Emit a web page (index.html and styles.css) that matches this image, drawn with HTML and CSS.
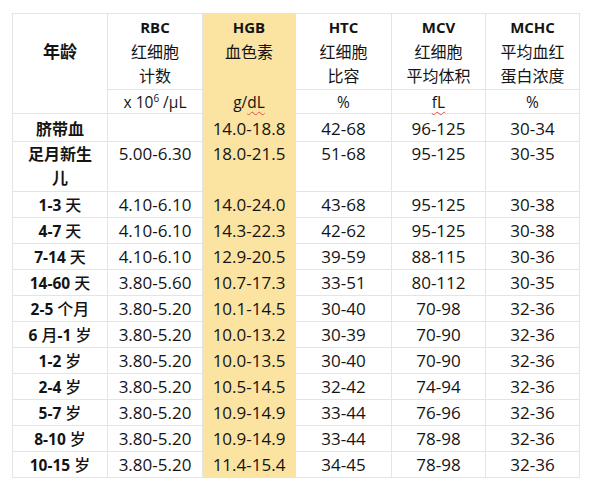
FILE: index.html
```html
<!DOCTYPE html>
<html lang="zh">
<head>
<meta charset="utf-8">
<link rel="stylesheet" href="styles.css">
</head>
<body>
<table class="ref">
  <colgroup>
    <col class="c-age"><col class="c-rbc"><col class="c-hgb"><col class="c-htc"><col class="c-mcv"><col class="c-mchc">
  </colgroup>
  <thead>
    <tr class="head">
      <th rowspan="2" class="age-head">年龄</th>
      <th><b>RBC</b><br>红细胞<br>计数</th>
      <th class="hgb"><b>HGB</b><br>血色素</th>
      <th><b>HTC</b><br>红细胞<br>比容</th>
      <th><b>MCV</b><br>红细胞<br>平均体积</th>
      <th><b>MCHC</b><br>平均血红<br>蛋白浓度</th>
    </tr>
    <tr class="units">
      <td>x 10<sup>6</sup> /μL</td>
      <td class="hgb">g/<span class="spell">dL</span></td>
      <td>%</td>
      <td><span class="spell">fL</span></td>
      <td>%</td>
    </tr>
  </thead>
  <tbody>
    <tr class="r-cord"><th>脐带血</th><td></td><td class="hgb">14.0-18.8</td><td>42-68</td><td>96-125</td><td>30-34</td></tr>
    <tr class="r-tall"><th>足月新生儿</th><td>5.00-6.30</td><td class="hgb">18.0-21.5</td><td>51-68</td><td>95-125</td><td>30-35</td></tr>
    <tr class="r"><th>1-3 <span class="u">天</span></th><td>4.10-6.10</td><td class="hgb">14.0-24.0</td><td>43-68</td><td>95-125</td><td>30-38</td></tr>
    <tr class="r"><th>4-7 <span class="u">天</span></th><td>4.10-6.10</td><td class="hgb">14.3-22.3</td><td>42-62</td><td>95-125</td><td>30-38</td></tr>
    <tr class="r"><th>7-14 <span class="u">天</span></th><td>4.10-6.10</td><td class="hgb">12.9-20.5</td><td>39-59</td><td>88-115</td><td>30-36</td></tr>
    <tr class="r"><th>14-60 <span class="u">天</span></th><td>3.80-5.60</td><td class="hgb">10.7-17.3</td><td>33-51</td><td>80-112</td><td>30-35</td></tr>
    <tr class="r"><th>2-5 <span class="u">个月</span></th><td>3.80-5.20</td><td class="hgb">10.1-14.5</td><td>30-40</td><td>70-98</td><td>32-36</td></tr>
    <tr class="r"><th>6 <span class="u">月</span>-1 <span class="u">岁</span></th><td>3.80-5.20</td><td class="hgb">10.0-13.2</td><td>30-39</td><td>70-90</td><td>32-36</td></tr>
    <tr class="r"><th>1-2 <span class="u">岁</span></th><td>3.80-5.20</td><td class="hgb">10.0-13.5</td><td>30-40</td><td>70-90</td><td>32-36</td></tr>
    <tr class="r"><th>2-4 <span class="u">岁</span></th><td>3.80-5.20</td><td class="hgb">10.5-14.5</td><td>32-42</td><td>74-94</td><td>32-36</td></tr>
    <tr class="r"><th>5-7 <span class="u">岁</span></th><td>3.80-5.20</td><td class="hgb">10.9-14.9</td><td>33-44</td><td>76-96</td><td>32-36</td></tr>
    <tr class="r"><th>8-10 <span class="u">岁</span></th><td>3.80-5.20</td><td class="hgb">10.9-14.9</td><td>33-44</td><td>78-98</td><td>32-36</td></tr>
    <tr class="r"><th>10-15 <span class="u">岁</span></th><td>3.80-5.20</td><td class="hgb">11.4-15.4</td><td>34-45</td><td>78-98</td><td>32-36</td></tr>
  </tbody>
</table>
</body>
</html>
```

FILE: styles.css
```css
html, body {
  margin: 0;
  padding: 0;
  background: #ffffff;
}

body {
  font-family: "Open Sans", "Noto Sans CJK SC", sans-serif;
  color: #141414;
}

.ref {
  margin: 13px 0 0 12px;
  border-collapse: collapse;
  table-layout: fixed;
  width: 567px;
}

.c-age { width: 95px; }
.c-rbc { width: 95px; }
.c-hgb { width: 93px; }
.c-htc { width: 96px; }
.c-mcv { width: 94px; }
.c-mchc { width: 94px; }

.ref th,
.ref td {
  border: 1px solid #e4e4e4;
  padding: 0;
  text-align: center;
  vertical-align: middle;
  font-weight: normal;
  box-sizing: border-box;
}

/* header */
.ref .head { height: 76px; }

.ref .head th {
  vertical-align: top;
  padding-top: 0;
  font-family: "Noto Sans CJK SC", sans-serif;
  font-size: 16px;
  line-height: 24px;
}

.head b {
  font-family: "Open Sans", "Noto Sans CJK SC", sans-serif;
  font-weight: 700;
  font-size: 15px;
}

.ref .head .age-head {
  font-weight: 700;
  font-size: 17px;
  line-height: 25px;
  padding-top: 24px;
}

.ref .units { height: 24px; }

.ref .units td {
  font-size: 15.5px;
  line-height: 20px;
}

.units sup {
  font-size: 10px;
  line-height: 0;
  vertical-align: 6px;
}

.spell {
  text-decoration: underline wavy #e0504a;
  text-decoration-thickness: 1px;
  text-underline-offset: 3px;
}

/* body */
.ref tbody td {
  font-size: 17px;
  line-height: 24px;
}

.ref tbody th {
  font-family: "Open Sans", "Noto Sans CJK SC", sans-serif;
  font-weight: 700;
  font-size: 15.5px;
  line-height: 24px;
}

.ref tbody th .u {
  font-family: "Noto Sans CJK SC", sans-serif;
  font-weight: 500;
  font-size: 16px;
}

.ref .r-cord { height: 28px; }

.ref .r-cord td,
.ref .r-cord th {
  padding-top: 2px;
}

.ref .r-cord th {
  font-size: 16px;
}

.ref .r-tall { height: 50px; }

.ref .r-tall th {
  padding: 0 10px;
  font-size: 16px;
  vertical-align: top;
}

.ref .r-tall td {
  vertical-align: top;
}

.ref .r { height: 25.7px; }

.ref .hgb {
  background: #fbe3a2;
  border-top-color: #fbe3a2;
  border-bottom-color: #fbe3a2;
}
```
